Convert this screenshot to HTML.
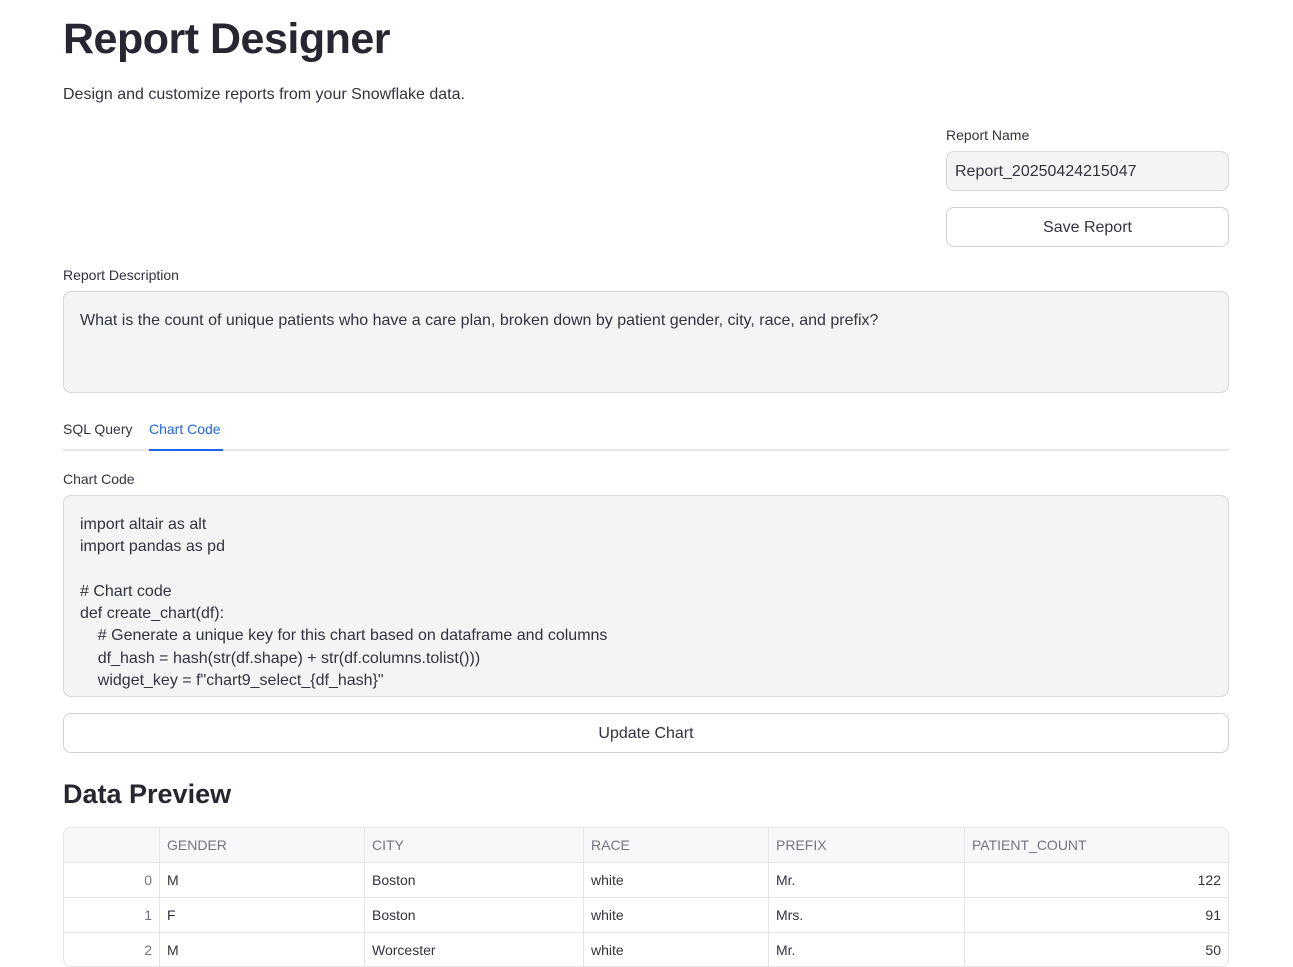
<!DOCTYPE html>
<html><head><meta charset="utf-8"><style>
*{box-sizing:border-box;margin:0;padding:0}
body{width:1293px;height:947px;overflow:hidden;background:#fff;font-family:"Liberation Sans",sans-serif;color:#31333f;position:relative}
.a{position:absolute}
h1{position:absolute;left:63px;top:15px;font-size:43px;font-weight:700;color:#262730;letter-spacing:-0.5px}
.lbl{font-size:14px;color:#31333f}
.box{background:#f4f4f5;border:1px solid #d6d6d9;border-radius:8px}
.btn{border:1px solid #d0d0d4;border-radius:8px;background:#fff;text-align:center;font-size:16px;color:#31333f}
table{border-collapse:collapse;font-size:14px}
td,th{border:1px solid #e6e6e9;height:35px;padding:0 7px;font-weight:400;text-align:left}
th{background:#f8f8fa;color:#737580}
</style></head><body>
<h1>Report Designer</h1>
<div class="a" style="left:63px;top:86px;font-size:16px">Design and customize reports from your Snowflake data.</div>
<div class="a lbl" style="left:946px;top:127px">Report Name</div>
<div class="a box" style="left:946px;top:151px;width:283px;height:40px;padding:11px 8px;font-size:16px">Report_20250424215047</div>
<div class="a btn" style="left:946px;top:207px;width:283px;height:40px;line-height:40px">Save Report</div>
<div class="a lbl" style="left:63px;top:267px">Report Description</div>
<div class="a box" style="left:63px;top:291px;width:1166px;height:102px;padding:20px 16px;font-size:16px">What is the count of unique patients who have a care plan, broken down by patient gender, city, race, and prefix?</div>
<div class="a lbl" style="left:63px;top:421px">SQL Query</div>
<div class="a lbl" style="left:149px;top:421px;color:#1c66e5">Chart Code</div>
<div class="a" style="left:63px;top:449px;width:1166px;height:2px;background:#e6e6e9"></div>
<div class="a" style="left:149px;top:449px;width:74px;height:2px;background:#1c66e5"></div>
<div class="a lbl" style="left:63px;top:471px">Chart Code</div>
<div class="a box" style="left:63px;top:495px;width:1166px;height:202px;padding:18px 16px;font-size:16px;line-height:22.3px;white-space:pre;overflow:hidden">import altair as alt
import pandas as pd

# Chart code
def create_chart(df):
    # Generate a unique key for this chart based on dataframe and columns
    df_hash = hash(str(df.shape) + str(df.columns.tolist()))
    widget_key = f"chart9_select_{df_hash}"</div>
<div class="a btn" style="left:63px;top:713px;width:1166px;height:40px;line-height:40px">Update Chart</div>
<div class="a" style="left:63px;top:779px;font-size:27px;font-weight:700;color:#262730">Data Preview</div>
<div class="a" style="left:63px;top:827px;width:1166px;border:1px solid #e6e6e9;border-radius:8px;overflow:hidden;height:140px">
<table style="width:1166px;margin:-1px">
<tr><th style="width:96px"></th><th style="width:205px">GENDER</th><th style="width:219px">CITY</th><th style="width:185px">RACE</th><th style="width:196px">PREFIX</th><th>PATIENT_COUNT</th></tr>
<tr><td style="text-align:right;color:#737580">0</td><td>M</td><td>Boston</td><td>white</td><td>Mr.</td><td style="text-align:right">122</td></tr>
<tr><td style="text-align:right;color:#737580">1</td><td>F</td><td>Boston</td><td>white</td><td>Mrs.</td><td style="text-align:right">91</td></tr>
<tr><td style="text-align:right;color:#737580">2</td><td>M</td><td>Worcester</td><td>white</td><td>Mr.</td><td style="text-align:right">50</td></tr>
</table></div>
</body></html>
